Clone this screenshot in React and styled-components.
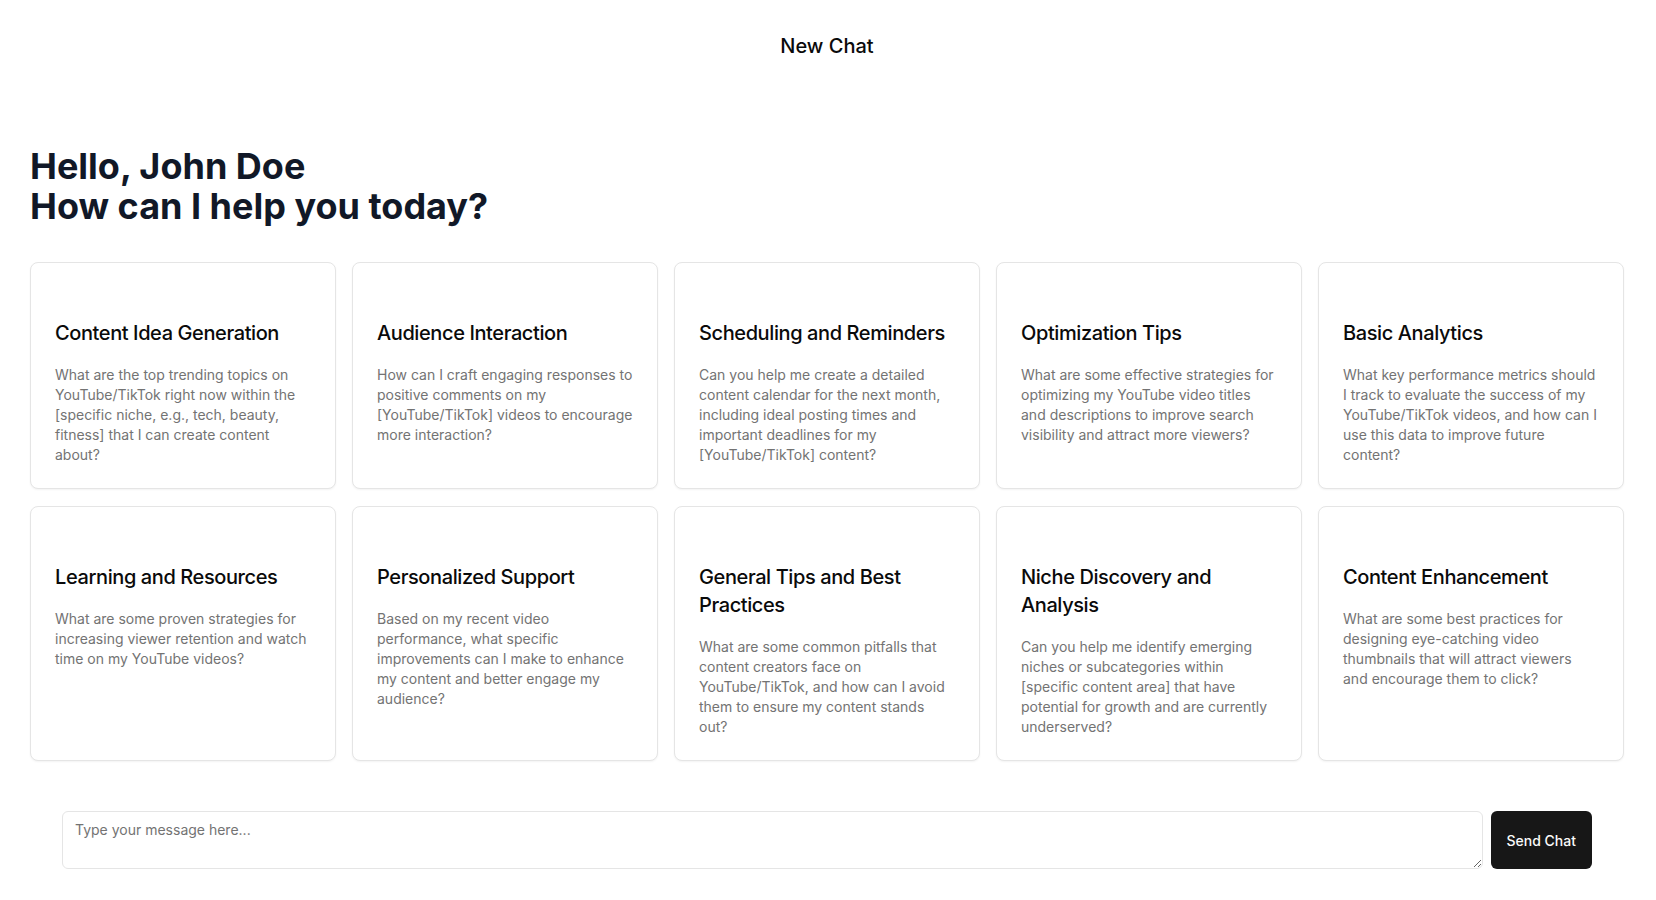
import styled, { createGlobalStyle } from "styled-components"

const GlobalStyle = createGlobalStyle`
    * {
        box-sizing: border-box;
    }

    body {
        margin: 0;
        background: #ffffff;
        font-family: Inter, "Noto Sans", "Liberation Sans", sans-serif;
        color: #0a0a0a;
    }
`

const Page = styled.div`
    padding: 0 32px 0 30px;
`

const Header = styled.header`
    padding-top: 32px;
    text-align: center;
    font-size: 20px;
    line-height: 28px;
    font-weight: 500;
    color: #0a0a0a;
`

const Greeting = styled.h1`
    margin: 86px 0 36px;
    font-size: 36px;
    line-height: 40px;
    font-weight: 700;
    color: #111827;
`

const Grid = styled.div`
    display: grid;
    grid-template-columns: repeat(5, 1fr);
    gap: 17px 16px;
`

const Card = styled.div`
    padding: 56px 24px 23px;
    border: 1px solid #e5e5e5;
    border-radius: 8px;
    background: #ffffff;
    box-shadow: 0 1px 2px rgba(0, 0, 0, 0.05);
`

const CardTitle = styled.h3`
    margin: 0 0 18px;
    font-size: 20px;
    line-height: 28px;
    font-weight: 500;
    letter-spacing: -0.4px;
    color: #0a0a0a;
`

const CardText = styled.p`
    margin: 0;
    font-size: 14px;
    line-height: 20px;
    color: #737373;
`

const ChatBar = styled.form`
    display: flex;
    gap: 8px;
    margin-top: 50px;
    padding: 0 32px;
`

const MessageInput = styled.textarea`
    flex: 1;
    height: 58px;
    padding: 8px 12px;
    border: 1px solid #e5e5e5;
    border-radius: 6px;
    font-family: inherit;
    font-size: 14px;
    line-height: 20px;
    color: #0a0a0a;
    resize: vertical;
    outline: none;

    &::placeholder {
        color: #737373;
    }
`

const SendButton = styled.button`
    height: 58px;
    padding: 0 16px;
    border: none;
    border-radius: 6px;
    background: #171717;
    color: #fafafa;
    font-family: inherit;
    font-size: 14px;
    font-weight: 500;
    cursor: pointer;
`

const prompts = [
    {
        title: "Content Idea Generation",
        text: "What are the top trending topics on YouTube/TikTok right now within the [specific niche, e.g., tech, beauty, fitness] that I can create content about?",
    },
    {
        title: "Audience Interaction",
        text: "How can I craft engaging responses to positive comments on my [YouTube/TikTok] videos to encourage more interaction?",
    },
    {
        title: "Scheduling and Reminders",
        text: "Can you help me create a detailed content calendar for the next month, including ideal posting times and important deadlines for my [YouTube/TikTok] content?",
    },
    {
        title: "Optimization Tips",
        text: "What are some effective strategies for optimizing my YouTube video titles and descriptions to improve search visibility and attract more viewers?",
    },
    {
        title: "Basic Analytics",
        text: "What key performance metrics should I track to evaluate the success of my YouTube/TikTok videos, and how can I use this data to improve future content?",
    },
    {
        title: "Learning and Resources",
        text: "What are some proven strategies for increasing viewer retention and watch time on my YouTube videos?",
    },
    {
        title: "Personalized Support",
        text: "Based on my recent video performance, what specific improvements can I make to enhance my content and better engage my audience?",
    },
    {
        title: "General Tips and Best Practices",
        text: "What are some common pitfalls that content creators face on YouTube/TikTok, and how can I avoid them to ensure my content stands out?",
    },
    {
        title: "Niche Discovery and Analysis",
        text: "Can you help me identify emerging niches or subcategories within [specific content area] that have potential for growth and are currently underserved?",
    },
    {
        title: "Content Enhancement",
        text: "What are some best practices for designing eye-catching video thumbnails that will attract viewers and encourage them to click?",
    },
]

const App = () => {
    return (
        <>
            <GlobalStyle />
            <Page>
                <Header>New Chat</Header>
                <Greeting>
                    Hello, John Doe
                    <br />
                    How can I help you today?
                </Greeting>
                <Grid>
                    {prompts.map(({ title, text }) => (
                        <Card key={title}>
                            <CardTitle>{title}</CardTitle>
                            <CardText>{text}</CardText>
                        </Card>
                    ))}
                </Grid>
                <ChatBar onSubmit={(e) => e.preventDefault()}>
                    <MessageInput placeholder="Type your message here..." />
                    <SendButton type="submit">Send Chat</SendButton>
                </ChatBar>
            </Page>
        </>
    )
}

export default App
